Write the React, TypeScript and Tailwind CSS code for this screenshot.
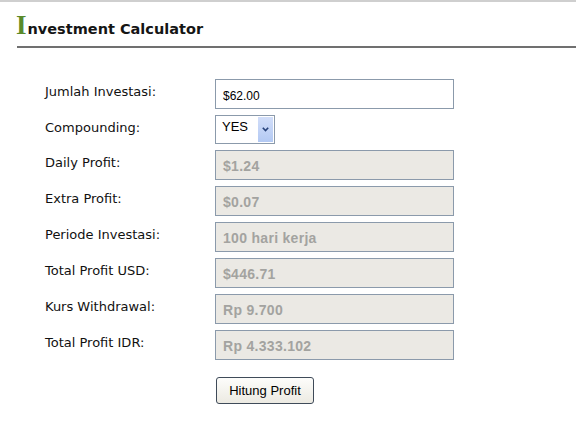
import React from "react";

const rows: { label: string; value: string }[] = [
  { label: "Daily Profit:", value: "$1.24" },
  { label: "Extra Profit:", value: "$0.07" },
  { label: "Periode Investasi:", value: "100 hari kerja" },
  { label: "Total Profit USD:", value: "$446.71" },
  { label: "Kurs Withdrawal:", value: "Rp 9.700" },
  { label: "Total Profit IDR:", value: "Rp 4.333.102" },
];

const labelCls =
  "mt-[5px] text-[13px] leading-[16px] text-[#111] [font-family:'DejaVu_Sans',Verdana,sans-serif]";

export default function App() {
  return (
    <div className="w-[576px] h-[432px] overflow-hidden bg-white border-t-2 border-[#cfcfcf]">
      <div className="h-[44px] pl-[16px] pt-[10px] flex items-baseline">
        <span className="text-[27px] leading-[26px] font-bold text-[#5a8a2a] [font-family:'Liberation_Serif','Times_New_Roman',serif]">
          I
        </span>
        <span className="ml-[1px] text-[14.5px] font-bold text-[#151515] [font-family:'DejaVu_Sans',Verdana,sans-serif]">
          nvestment Calculator
        </span>
      </div>
      <div className="ml-[17px] h-[2px] bg-[#707070]" />

      <div className="mt-[31px] pl-[45px] grid grid-cols-[170px_239px] gap-y-[6px]">
        <div className={labelCls}>Jumlah Investasi:</div>
        <div className="h-[30px] border border-[#8b9aab] bg-white flex items-center pl-[7px] pt-[3px] text-[12px] text-black [font-family:'Liberation_Sans',Arial,sans-serif]">
          $62.00
        </div>

        <div className={labelCls}>Compounding:</div>
        <div>
          <div className="w-[60px] h-[29px] border border-[#8b9aab] bg-white flex">
            <div className="flex-1 pl-[6px] pt-[3px] text-[13px] leading-[15px] text-black [font-family:'Liberation_Sans',Arial,sans-serif]">
              YES
            </div>
            <div className="w-[15px] my-[1px] mr-[1px] bg-gradient-to-b from-[#d2def9] to-[#b3c9f3] flex items-center justify-center">
              <svg width="7" height="5" viewBox="0 0 7 5">
                <path d="M0.8 0.8 L3.5 3.6 L6.2 0.8" fill="none" stroke="#27427a" strokeWidth="1.6" />
              </svg>
            </div>
          </div>
        </div>

        {rows.map((r) => (
          <React.Fragment key={r.label}>
            <div className={labelCls}>{r.label}</div>
            <div className="h-[30px] border border-[#8b9aab] bg-[#ebe9e4] flex items-center pl-[7px] pt-[2px] text-[14px] font-bold tracking-[0.3px] text-[#a3a3a0] [font-family:'Liberation_Sans',Arial,sans-serif]">
              {r.value}
            </div>
          </React.Fragment>
        ))}

        <div />
        <div className="mt-[11px] pl-[1px]">
          <button className="w-[98px] h-[27px] rounded-[3px] border border-[#3f4b59] bg-gradient-to-b from-[#fdfdfb] to-[#eceae2] text-[13px] text-black [font-family:'Liberation_Sans',Arial,sans-serif]">
            Hitung Profit
          </button>
        </div>
      </div>
    </div>
  );
}
